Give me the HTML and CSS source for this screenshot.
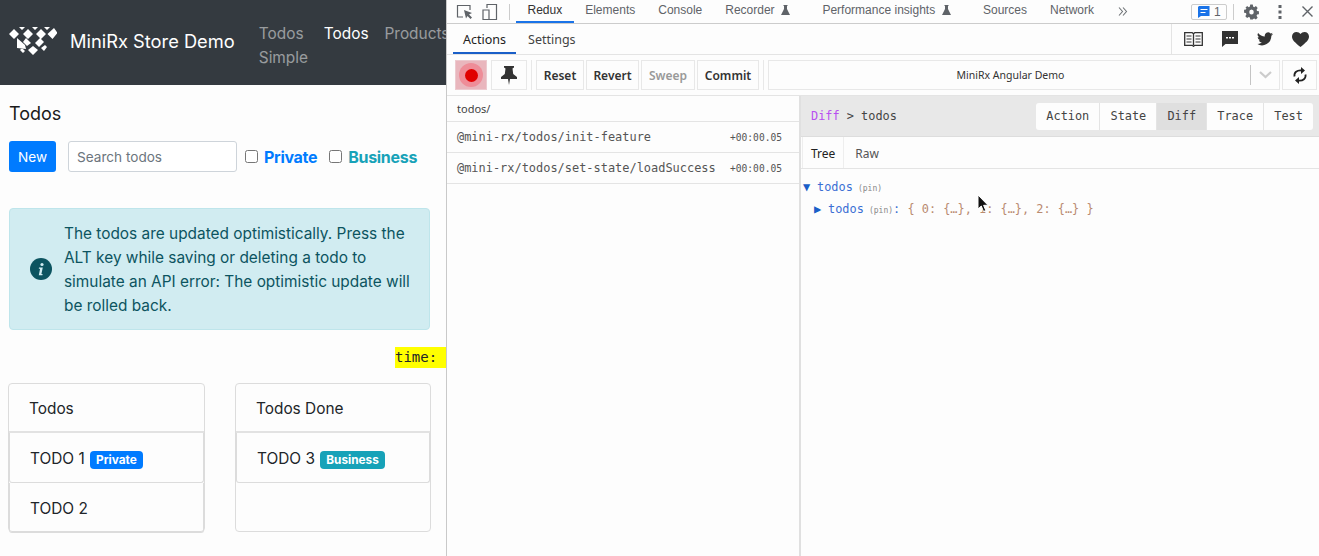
FILE: index.html
```html
<!DOCTYPE html>
<html lang="en">

<head>
    <title>MiniRx Store Demo</title>
    <link rel="stylesheet" href="styles.css">
</head>

<body>
    <div class="app">
        <nav class="navbar">
            <div class="brand">
                <svg class="logo" viewBox="0 0 48 28">
                    <path fill="#fff" d="M5 2l5 5-5 5-5-5zM16 0l-3 3-3-3zM19 2l5 5-5 5-5-5zM32 2l5 5-5 5-5-5zM45 1l3.500 5-5 6-5-5zM29 0l-3 3-3-3zM41 0l-3 3-3-3zM8 11v10l9 1-1-4zM17 11l5 5-4 3-4-4zM31 11l4 4-5 5-4-4zM24 19l5 4-5 5-5-5zM13 21l3 3-2 2-3-3zM36 18l2 2-3 4-3-3z"/>
                </svg>
                <span class="brand-name">MiniRx Store Demo</span>
            </div>
            <div class="nav-links">
                <a class="nav-link nav-link-wrap">Todos Simple</a>
                <a class="nav-link active">Todos</a>
                <a class="nav-link">Products</a>
            </div>
        </nav>

        <div class="content">
            <h2 class="page-title">Todos</h2>
            <div class="toolbar">
                <button class="btn-new">New</button>
                <input class="search" type="text" placeholder="Search todos">
                <label class="check check-private"><input type="checkbox">Private</label>
                <label class="check check-business"><input type="checkbox">Business</label>
            </div>

            <div class="alert">
                <svg class="alert-icon" viewBox="0 0 22 22">
                    <circle cx="11" cy="11" r="11" fill="#0c5460"/>
                    <circle cx="12" cy="6.500" r="1.600" fill="#d1ecf1"/>
                    <path fill="#d1ecf1" d="M9 9.500h3.800l-1.400 6.500h1.200l-.2 1.200H8.800l1.300-6.500H8.800z"/>
                </svg>
                <p>The todos are updated optimistically. Press the ALT key while saving or deleting a todo to simulate an API error: The optimistic update will be rolled back.</p>
            </div>

            <div class="time-row"><span class="time">time:</span></div>

            <div class="cards">
                <div class="card card-wide">
                    <div class="card-header">Todos</div>
                    <div class="todo-item">TODO 1 <span class="badge badge-private">Private</span></div>
                    <div class="todo-item">TODO 2</div>
                </div>
                <div class="card">
                    <div class="card-header">Todos Done</div>
                    <div class="todo-item">TODO 3 <span class="badge badge-business">Business</span></div>
                </div>
            </div>
        </div>
    </div>

    <div class="devtools">
        <div class="dt-tabs">
            <svg class="dt-icon inspect" width="18" height="18" viewBox="0 0 18 18">
                <path fill="none" stroke="#5f6368" stroke-width="1.200" d="M7 14H1.500V2.500H14V7"/>
                <path fill="#5f6368" d="M8 7l8 3-3 1.500 3 3-1.500 1.500-3-3L10 15.500z"/>
            </svg>
            <svg class="dt-icon device" width="16" height="18" viewBox="0 0 16 18">
                <path fill="none" stroke="#5f6368" stroke-width="1.200" d="M5 5V1.500h9.500v15H1V7h6v9.500"/>
            </svg>
            <span class="dt-sep"></span>
            <a class="dt-tab active">Redux</a>
            <a class="dt-tab">Elements</a>
            <a class="dt-tab">Console</a>
            <a class="dt-tab dt-tab-flask">Recorder
                <svg class="flask" width="9" height="10" viewBox="0 0 9 10"><path fill="#5f6368" d="M2.500 0h4v1H6v3l3 6H0l3-6V1h-.5z"/></svg>
            </a>
            <a class="dt-tab dt-tab-flask">Performance insights
                <svg class="flask" width="9" height="10" viewBox="0 0 9 10"><path fill="#5f6368" d="M2.500 0h4v1H6v3l3 6H0l3-6V1h-.5z"/></svg>
            </a>
            <a class="dt-tab">Sources</a>
            <a class="dt-tab">Network</a>
            <svg class="more" width="10" height="9" viewBox="0 0 10 9">
                <path fill="none" stroke="#6e7276" stroke-width="1.100" d="M1 .5l3.500 4L1 8.500M5 .5l3.500 4L5 8.500"/>
            </svg>
            <div class="dt-right">
                <span class="issues">
                    <svg width="12" height="12" viewBox="0 0 12 12"><path fill="#1a73e8" d="M1 0h10.500v10H3l-3 2V1z"/><path fill="#fff" d="M2.500 3h7v1h-7zM2.500 6h5v1h-5z"/></svg>
                    <span>1</span>
                </span>
                <span class="dt-sep dt-sep-right"></span>
                <svg class="gear" width="15" height="16" viewBox="0 0 16 16">
                    <path fill="#5f6368" fill-rule="evenodd" d="M6.500 0h3l.4 2.200 1.400.6L13.200 1.500l2.100 2.100-1.300 1.900.6 1.400 2.200.4v3l-2.200.4-.6 1.400 1.300 1.900-2.100 2.100-1.900-1.300-1.400.6L9.500 16h-3l-.4-2.200-1.400-.6-1.900 1.300L.7 12.400 2 10.500l-.6-1.400L-.800 8.700v-3l2.200-.4.600-1.400L.7 3.600 2.800 1.500l1.900 1.300 1.400-.6zM8 5.300a2.700 2.700 0 1 0 0 5.400 2.700 2.700 0 0 0 0-5.400z" transform="translate(.8 0) scale(.9 1)"/>
                </svg>
                <svg class="dots" width="4" height="14" viewBox="0 0 4 14"><path fill="#5f6368" d="M.5 0h3v3h-3zM.5 5.500h3v3h-3zM.5 11h3v3h-3z"/></svg>
                <svg class="close" width="11" height="11" viewBox="0 0 11 11"><path stroke="#5f6368" stroke-width="1.400" d="M.5.500l10 10M10.500.500l-10 10"/></svg>
            </div>
        </div>

        <div class="rx-tabs">
            <a class="rx-tab active">Actions</a>
            <a class="rx-tab">Settings</a>
            <div class="rx-links">
                <svg width="19" height="15" viewBox="0 0 19 15">
                    <path fill="none" stroke="#333" stroke-width="1.300" d="M.7.700h7.500l1.300 1 1.300-1h7.500v12.600h-7.500l-1.300 1-1.300-1H.7zM9.500 2v11"/>
                    <path stroke="#333" d="M2.500 4h5M2.500 7h5M2.500 10h5M11.500 4h5M11.500 7h5M11.500 10h5"/>
                </svg>
                <svg width="16" height="16" viewBox="0 0 16 16">
                    <path fill="#333" d="M0 0h16v13H3.500L0 16z"/>
                    <path fill="#fff" d="M4 6h2v1.500H4zM7 6h2v1.500H7zM10 6h2v1.500h-2z"/>
                </svg>
                <svg width="16" height="14" viewBox="0 0 24 20">
                    <path fill="#333" d="M24 2.400a10 10 0 0 1-2.800.8A5 5 0 0 0 23.300.500a10 10 0 0 1-3.100 1.200 4.900 4.900 0 0 0-8.400 4.500A14 14 0 0 1 1.700.900a4.900 4.900 0 0 0 1.500 6.600A4.900 4.900 0 0 1 1 6.900a4.900 4.900 0 0 0 3.900 4.800 5 5 0 0 1-2.200.1 4.900 4.900 0 0 0 4.600 3.400A9.900 9.900 0 0 1 0 17.300 14 14 0 0 0 21.500 5q1.500-1.100 2.500-2.600z"/>
                </svg>
                <svg width="17" height="15" viewBox="0 0 17 15">
                    <path fill="#333" d="M8.500 15C3 10.500 0 8 0 4.500 0 2 2 0 4.500 0c1.600 0 3.100.8 4 2 .9-1.200 2.400-2 4-2C15 0 17 2 17 4.500c0 3.500-3 6-8.500 10.500z"/>
                </svg>
            </div>
        </div>

        <div class="rx-toolbar">
            <button class="rx-btn rec-btn"><span class="rec-halo"><span class="rec-dot"></span></span></button>
            <button class="rx-btn pin-btn">
                <svg width="16" height="19" viewBox="0 0 16 19"><path fill="#333" d="M3 0h10v1.500l-1.500 1 .7 5.500L16 11v2H9l-1 6-1-6H0v-2l3.800-3 .7-5.500L3 1.500z"/></svg>
            </button>
            <span class="rx-sep"></span>
            <button class="rx-btn txt-btn">Reset</button>
            <button class="rx-btn txt-btn">Revert</button>
            <button class="rx-btn txt-btn disabled">Sweep</button>
            <button class="rx-btn txt-btn">Commit</button>
            <span class="rx-sep"></span>
            <div class="instance">
                <span class="instance-name">MiniRx Angular Demo</span>
                <span class="instance-arrow">
                    <svg width="13" height="8" viewBox="0 0 13 8"><path fill="none" stroke="#ccc" stroke-width="2.200" d="M1 1l5.500 5L12 1"/></svg>
                </span>
            </div>
            <button class="rx-btn sync-btn">
                <svg width="14" height="17" viewBox="0 0 14 17">
                    <path fill="none" stroke="#222" stroke-width="1.800" d="M1.500 9.500C.8 5.500 4 3 8.500 3.500M12.500 7.500c.7 4-2.500 6.500-7 6"/>
                    <path fill="#222" d="M8 0l4 3.500L8 7zM6 10l-4 3.500L6 17z"/>
                </svg>
            </button>
        </div>

        <div class="rx-body">
            <div class="action-list">
                <div class="action-filter">todos/</div>
                <div class="action-row"><span>@mini-rx/todos/init-feature</span><span class="action-time">+00:00.05</span></div>
                <div class="action-row"><span>@mini-rx/todos/set-state/loadSuccess</span><span class="action-time">+00:00.05</span></div>
            </div>
            <div class="inspector">
                <div class="inspector-head">
                    <div class="crumbs"><span class="crumb-diff">Diff</span> &gt; todos</div>
                    <div class="mode-group">
                        <span class="mode">Action</span>
                        <span class="mode">State</span>
                        <span class="mode active">Diff</span>
                        <span class="mode">Trace</span>
                        <span class="mode">Test</span>
                    </div>
                </div>
                <div class="view-tabs">
                    <span class="view-tab active">Tree</span>
                    <span class="view-tab">Raw</span>
                </div>
                <div class="tree">
                    <div class="tree-row"><span class="arrow">&#9660;</span><span class="key">todos</span> <span class="pin">(pin)</span></div>
                    <div class="tree-row tree-child"><span class="arrow">&#9654;</span><span class="key">todos</span> <span class="pin">(pin)</span><span class="key">:</span> <span class="val">{ 0: {…}, 1: {…}, 2: {…} }</span></div>
                </div>
            </div>
        </div>
    </div>

    <svg class="cursor" width="12" height="19" viewBox="0 0 12 19">
        <path fill="#111" stroke="#fff" stroke-width="1" d="M1 1v14l3.300-3 2.200 5.500 2.300-1-2.200-5.200H11z"/>
    </svg>
</body>

</html>
```

FILE: styles.css
```css
body {
    margin: 0;
    width: 1319px;
    height: 556px;
    display: flex;
    overflow: hidden;
    background-color: #fdfdfd;
    font-family: Inter, "Liberation Sans", sans-serif;
    color: #212529;
}

/* left side: the demo app */
.app {
    width: 446px;
    flex-shrink: 0;
    overflow: hidden;
    border-right: 1px solid #c9c9c9;
}

.navbar {
    height: 85px;
    background-color: #343a40;
    display: flex;
    align-items: center;
    padding-left: 9px;
}

.brand {
    display: flex;
    align-items: center;
    gap: 13px;
    flex-shrink: 0;
    margin-bottom: 3px;
}

.logo {
    width: 48px;
    height: 28px;
}

.brand-name {
    color: #fff;
    font-size: 18.3px;
    white-space: nowrap;
}

.nav-links {
    display: flex;
    gap: 16px;
    margin-left: 24px;
    margin-top: 7px;
    align-items: flex-start;
}

.nav-link {
    color: rgba(255, 255, 255, 0.5);
    font-size: 15.4px;
    line-height: 24px;
    white-space: nowrap;
}

.nav-link-wrap {
    width: 49px;
    white-space: normal;
}

.nav-link.active {
    color: #fff;
}

.content {
    padding: 17px 0 0 9px;
}

.page-title {
    margin: 0;
    font-size: 18px;
    line-height: 24px;
    font-weight: 400;
    color: #1a1a1a;
}

.toolbar {
    display: flex;
    align-items: center;
    margin-top: 15px;
    height: 31px;
}

.btn-new {
    width: 47px;
    height: 31px;
    border: 0;
    border-radius: 3px;
    background-color: #007bff;
    color: #fff;
    font-family: inherit;
    font-size: 13.6px;
    padding: 0;
}

.search {
    width: 169px;
    height: 31px;
    box-sizing: border-box;
    margin-left: 12px;
    padding: 0 8px;
    border: 1px solid #ced4da;
    border-radius: 3px;
    font-family: inherit;
    font-size: 13.6px;
    background-color: #fff;
}

.search::placeholder {
    color: #6c757d;
    opacity: 1;
}

.check {
    display: flex;
    align-items: center;
    font-size: 16px;
    font-weight: 700;
    letter-spacing: -0.3px;
}

.check input {
    width: 13px;
    height: 13px;
    margin: 0 6px 0 0;
}

.check-private {
    margin-left: 8px;
    color: #007bff;
}

.check-business {
    margin-left: 12px;
    color: #17a2b8;
}

.alert {
    width: 421px;
    box-sizing: border-box;
    margin-top: 36px;
    padding: 13px 16px 11px 20px;
    display: flex;
    align-items: center;
    gap: 12px;
    background-color: #d1ecf1;
    border: 1px solid #bee5eb;
    border-radius: 4px;
    color: #0c5460;
    font-size: 15.4px;
    line-height: 24px;
}

.alert p {
    margin: 0;
}

.alert-icon {
    width: 22px;
    height: 22px;
    flex-shrink: 0;
    margin-bottom: 2px;
}

.time-row {
    display: flex;
    justify-content: flex-end;
    margin-top: 17px;
}

.time {
    background-color: #ff0;
    font-family: "DejaVu Sans Mono", monospace;
    font-size: 14px;
    line-height: 20px;
    padding: 0 9px 1px 0;
    width: 42px;
}

.cards {
    display: flex;
    gap: 30px;
    margin: 15px 0 0 -1px;
}

.card {
    width: 196px;
    height: 149px;
    box-sizing: border-box;
    border: 1px solid #dcdcdc;
    border-radius: 4px;
    font-size: 15.4px;
}

.card-wide {
    width: 197px;
}

.card-header {
    height: 47px;
    line-height: 49px;
    padding-left: 20px;
    border-bottom: 2px solid #e2e2e2;
}

.todo-item {
    height: 49px;
    line-height: 51px;
    padding-left: 20px;
    border: 1px solid #dcdcdc;
    border-top: 0;
    border-radius: 0 0 3px 3px;
    white-space: nowrap;
}

.badge {
    display: inline-block;
    margin-left: 1px;
    padding: 0 6px;
    border-radius: 4px;
    color: #fff;
    font-size: 11.8px;
    font-weight: 700;
    line-height: 18px;
    vertical-align: 0;
}

.badge-private {
    background-color: #007bff;
}

.badge-business {
    background-color: #17a2b8;
}

/* right side: devtools */
.devtools {
    flex: 1;
    min-width: 0;
    display: flex;
    flex-direction: column;
}

.dt-tabs {
    height: 23px;
    display: flex;
    align-items: center;
    border-bottom: 1px solid #ccc;
    font-family: "Liberation Sans", sans-serif;
    font-size: 12px;
    color: #5f6368;
}

.inspect {
    margin-left: 9px;
}

.device {
    margin-left: 8px;
}

.dt-sep {
    width: 1px;
    height: 16px;
    margin: 0 6px 0 11px;
    background-color: #ccc;
}

.dt-tab {
    height: 23px;
    line-height: 20px;
    padding: 0 11.5px;
    box-sizing: border-box;
    white-space: nowrap;
}

.dt-tab.active {
    color: #333;
    border-bottom: 2px solid #1a73e8;
}

.dt-tab-flask {
    padding-right: 21px;
}

.flask {
    margin-left: 3px;
    vertical-align: -1px;
}

.more {
    margin-left: 12px;
}

.dt-right {
    margin-left: auto;
    display: flex;
    align-items: center;
    padding-right: 6px;
}

.issues {
    width: 36px;
    height: 16px;
    box-sizing: border-box;
    display: flex;
    align-items: center;
    gap: 4px;
    padding-left: 6px;
    border: 1px solid #ccc;
    border-radius: 2px;
    font-size: 12px;
}

.dt-sep-right {
    margin: 0 10px 0 6px;
}

.dots {
    margin: 0 20px 0 19px;
}

.rx-tabs {
    height: 30px;
    display: flex;
    border-bottom: 1px solid #e4e4e4;
    font-family: "Noto Sans", sans-serif;
    font-size: 12.500px;
    color: #444;
}

.rx-tab {
    padding: 0 10px;
    line-height: 31px;
    margin-right: 2px;
}

.rx-tab:first-child {
    margin-left: 6px;
}

.rx-tab.active {
    color: #222;
    box-sizing: border-box;
    height: 30px;
    border-bottom: 2px solid #1a5fc8;
}

.rx-links {
    margin-left: auto;
    width: 148px;
    box-sizing: border-box;
    border-left: 1px solid #e4e4e4;
    display: flex;
    align-items: center;
    gap: 19px;
    padding-left: 12px;
}

.rx-toolbar {
    height: 41px;
    box-sizing: border-box;
    display: flex;
    align-items: center;
    gap: 2px;
    padding: 0 2px 0 8px;
    border-bottom: 1px solid #e4e4e4;
}

.rx-btn {
    height: 30px;
    border: 1px solid #e8e8e8;
    background-color: #fdfdfd;
    padding: 0;
    display: flex;
    align-items: center;
    justify-content: center;
    font-family: "Noto Sans", sans-serif;
    font-size: 12px;
    font-weight: 600;
    color: #333;
}

.rec-btn {
    width: 32px;
    background-color: #e9b6bd;
    border-color: #eccacf;
}

.rec-halo {
    width: 24px;
    height: 24px;
    border-radius: 50%;
    background-color: #ee8d98;
    display: flex;
    align-items: center;
    justify-content: center;
}

.rec-dot {
    width: 13px;
    height: 13px;
    border-radius: 50%;
    background-color: #e00000;
}

.pin-btn {
    width: 36px;
    margin-left: 2px;
}

.rx-sep {
    width: 1px;
    height: 30px;
    margin: 0 2px;
    background-color: #e8e8e8;
}

.txt-btn:nth-of-type(3) {
    width: 48px;
}

.txt-btn:nth-of-type(4) {
    width: 53px;
}

.txt-btn:nth-of-type(5) {
    width: 54px;
}

.txt-btn:nth-of-type(6) {
    width: 62px;
}

.disabled {
    color: #999;
}

.instance {
    flex: 1;
    height: 30px;
    box-sizing: border-box;
    display: flex;
    align-items: center;
    border: 1px solid #e8e8e8;
    font-family: "Noto Sans", sans-serif;
    font-size: 10.500px;
    color: #333;
}

.instance-name {
    flex: 1;
    text-align: center;
    padding-left: 2px;
}

.instance-arrow {
    width: 28px;
    height: 20px;
    border-left: 1px solid #c4c4c4;
    display: flex;
    align-items: center;
    justify-content: center;
}

.sync-btn {
    width: 35px;
}

.rx-body {
    flex: 1;
    display: flex;
    min-height: 0;
}

.action-list {
    width: 352px;
    flex-shrink: 0;
    border-right: 1px solid #e0e0e0;
}

.action-filter {
    height: 26px;
    box-sizing: border-box;
    padding-left: 10px;
    line-height: 25px;
    border-bottom: 1px solid #e4e4e4;
    font-family: "Noto Sans", sans-serif;
    font-size: 11px;
    color: #444;
}

.action-row {
    height: 31px;
    box-sizing: border-box;
    display: flex;
    align-items: center;
    justify-content: space-between;
    padding: 0 17px 0 10px;
    border-bottom: 1px solid #e4e4e4;
    font-family: "DejaVu Sans Mono", monospace;
    font-size: 11.950px;
    color: #555;
}

.action-time {
    font-size: 9.600px;
}

.inspector {
    flex: 1;
    min-width: 0;
    border-left: 1px solid #e0e0e0;
    font-family: "DejaVu Sans Mono", monospace;
    font-size: 11.900px;
}

.inspector-head {
    height: 41px;
    box-sizing: border-box;
    display: flex;
    align-items: center;
    justify-content: space-between;
    padding: 0 6px 0 10px;
    background-color: #e8e8e8;
    border-bottom: 1px solid #ddd;
    color: #444;
}

.crumb-diff {
    color: #b84ff0;
}

.mode-group {
    display: flex;
    height: 27px;
    border-radius: 3px;
    background-color: #fdfdfd;
    overflow: hidden;
}

.mode {
    padding: 0 10.100px;
    line-height: 27px;
    border-right: 1px solid #e4e4e4;
}

.mode:last-child {
    border-right: 0;
}

.mode.active {
    background-color: #dfdfdf;
}

.view-tabs {
    height: 32px;
    box-sizing: border-box;
    display: flex;
    padding-left: 1px;
    border-bottom: 1px solid #e4e4e4;
    font-family: "Noto Sans", sans-serif;
    font-size: 12px;
    color: #555;
}

.view-tab {
    padding: 0 11px;
    line-height: 33px;
}

.view-tab.active {
    color: #222;
    border-left: 1px solid #eee;
    border-right: 1px solid #eee;
    padding: 0 8px;
}

.tree {
    padding-top: 7px;
}

.tree-row {
    height: 22px;
    line-height: 22px;
    white-space: nowrap;
    padding-left: 2px;
}

.tree-child {
    padding-left: 13px;
}

.arrow {
    color: #1a5fc8;
    font-size: 12px;
    line-height: 1;
    display: inline-block;
    width: 14px;
}

.key {
    color: #3b6fd4;
}

.pin {
    color: #888;
    font-size: 8px;
    margin-left: -2px;
}

.val {
    color: #b98a70;
}

/* mouse pointer caught in the shot */
.cursor {
    position: absolute;
    left: 977px;
    top: 194px;
}
```
